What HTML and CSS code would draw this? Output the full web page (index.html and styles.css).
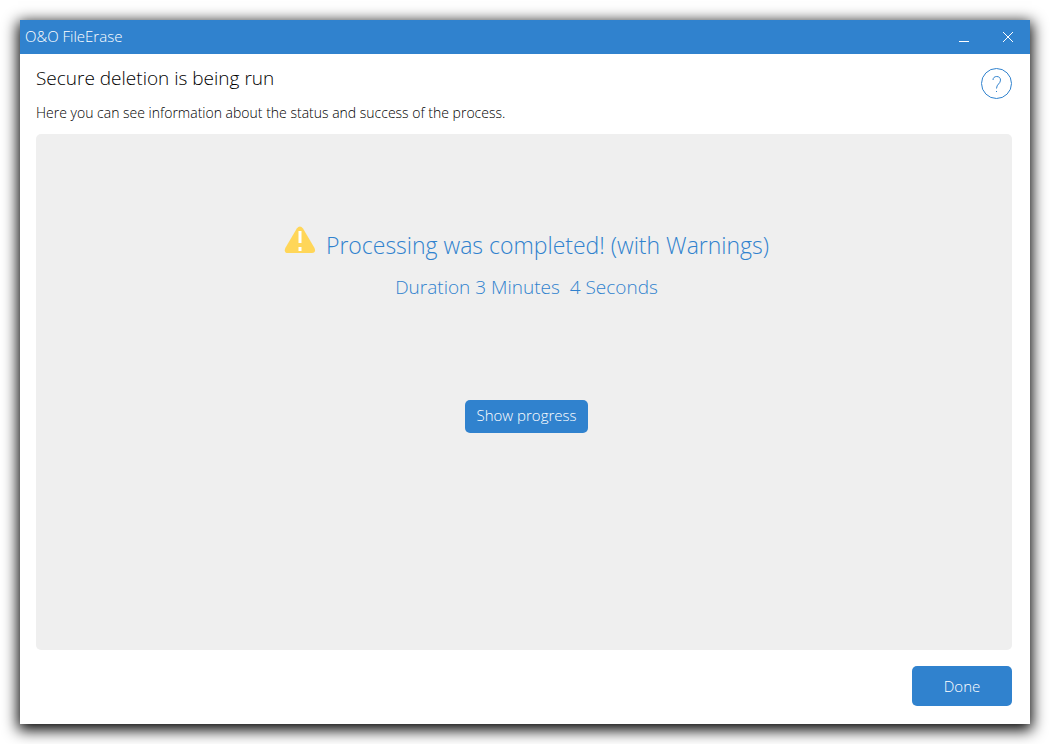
FILE: index.html
```
<!DOCTYPE html>
<html lang="en">
<head>
    <meta charset="UTF-8">
    <meta name="viewport" content="width=device-width, initial-scale=1.0">
    <title>O&amp;O FileErase</title>
    <link rel="stylesheet" href="styles.css">
</head>
<body>
    <div class="window">
        <header class="titlebar">
            <span class="app-name">O&amp;O FileErase</span>
            <button class="window-btn" type="button" aria-label="Minimize">
                <svg width="12" height="12" viewBox="0 0 12 12"><path d="M1 10.5h10"/></svg>
            </button>
            <button class="window-btn" type="button" aria-label="Close">
                <svg width="12" height="12" viewBox="0 0 12 12"><path d="M1 1l10 10M11 1L1 11"/></svg>
            </button>
        </header>

        <main class="content">
            <div class="intro">
                <div>
                    <h1>Secure deletion is being run</h1>
                    <p>Here you can see information about the status and success of the process.</p>
                </div>
                <button class="help" type="button" aria-label="Help">
                    <svg width="31" height="31" viewBox="0 0 31 31">
                        <circle cx="15.500" cy="15.500" r="15"/>
                        <path d="M12 12C12 9.700 13.600 8.500 15.700 8.500c2.400 0 3.800 1.400 3.800 3.600 0 3.700-4 4-4 8.400"/>
                        <path d="M15.500 23v1"/>
                    </svg>
                </button>
            </div>

            <section class="panel">
                <div class="result">
                    <svg class="warning" width="32" height="28" viewBox="0 0 32 28">
                        <path class="triangle" d="M12.800 2.500q3.200-4 6.200 0l11.500 19.500q1.800 5-2.500 5H4q-4.500 0-2.700-5z"/>
                        <path class="mark" d="M16 5v12M16 21v4"/>
                    </svg>
                    <h2>Processing was completed! (with Warnings)</h2>
                </div>
                <p class="duration">Duration 3 Minutes&nbsp; 4 Seconds</p>
                <button class="btn btn-progress" type="button">Show progress</button>
            </section>

            <footer class="actions">
                <button class="btn btn-done" type="button">Done</button>
            </footer>
        </main>
    </div>
</body>
</html>
```
FILE: styles.css
```
* {
    box-sizing: border-box;
}
body {
    margin: 0;
    padding: 20px;
    height: 100vh;
    background: #fff;
    color: #000;
    font-family: "Open Sans", "Noto Sans", sans-serif;
    font-weight: 300;
}
h1, h2, p {
    margin: 0;
    font-weight: 300;
}
button {
    font-family: inherit;
    font-weight: 300;
    border: none;
    cursor: pointer;
}
.window {
    display: flex;
    flex-direction: column;
    height: 100%;
    background: #fff;
    box-shadow: 0 4px 14px 2px #000;
}

/* Title bar */
.titlebar {
    display: flex;
    align-items: center;
    height: 34px;
    padding-left: 5px;
    background: #3082ce;
    color: #fff;
}
.app-name {
    flex: 1;
    padding-bottom: 2px;
    font-size: 15px;
}
.window-btn {
    display: flex;
    align-items: center;
    justify-content: center;
    width: 44px;
    height: 34px;
    padding: 0;
    background: none;
}
.window-btn svg {
    fill: none;
    stroke: #fff;
}

/* Page content */
.content {
    flex: 1;
    display: flex;
    flex-direction: column;
    padding: 12px 18px 18px 16px;
}
.intro {
    display: flex;
    justify-content: space-between;
    align-items: flex-start;
    height: 68px;
}
.intro h1 {
    font-size: 19px;
    line-height: 24px;
}
.intro p {
    margin-top: 13px;
    font-size: 14px;
    line-height: 20px;
}
.help {
    padding: 0;
    margin-top: 2px;
    background: none;
}
.help svg {
    display: block;
    fill: none;
    stroke: #3082ce;
}
.panel {
    flex: 1;
    display: flex;
    flex-direction: column;
    align-items: center;
    padding: 90px 0 0 5px;
    border-radius: 5px;
    background: #efefef;
    color: #3082ce;
}
.result {
    display: flex;
    align-items: flex-start;
    gap: 10px;
}
.result h2 {
    font-size: 23px;
    line-height: 42px;
}
.warning {
    margin-top: 2px;
}
.triangle {
    fill: #ffd658;
}
.mark {
    stroke: #fff;
    stroke-width: 3;
}
.duration {
    margin: 6px 0 98px;
    font-size: 19px;
    line-height: 30px;
}
.btn {
    height: 40px;
    border-radius: 5px;
    background: #3082ce;
    color: #fff;
    font-size: 15px;
}
.btn-progress {
    height: 33px;
    padding: 0 12px 4px;
}
.actions {
    display: flex;
    justify-content: flex-end;
    margin-top: 16px;
}
.btn-done {
    width: 100px;
}
```
